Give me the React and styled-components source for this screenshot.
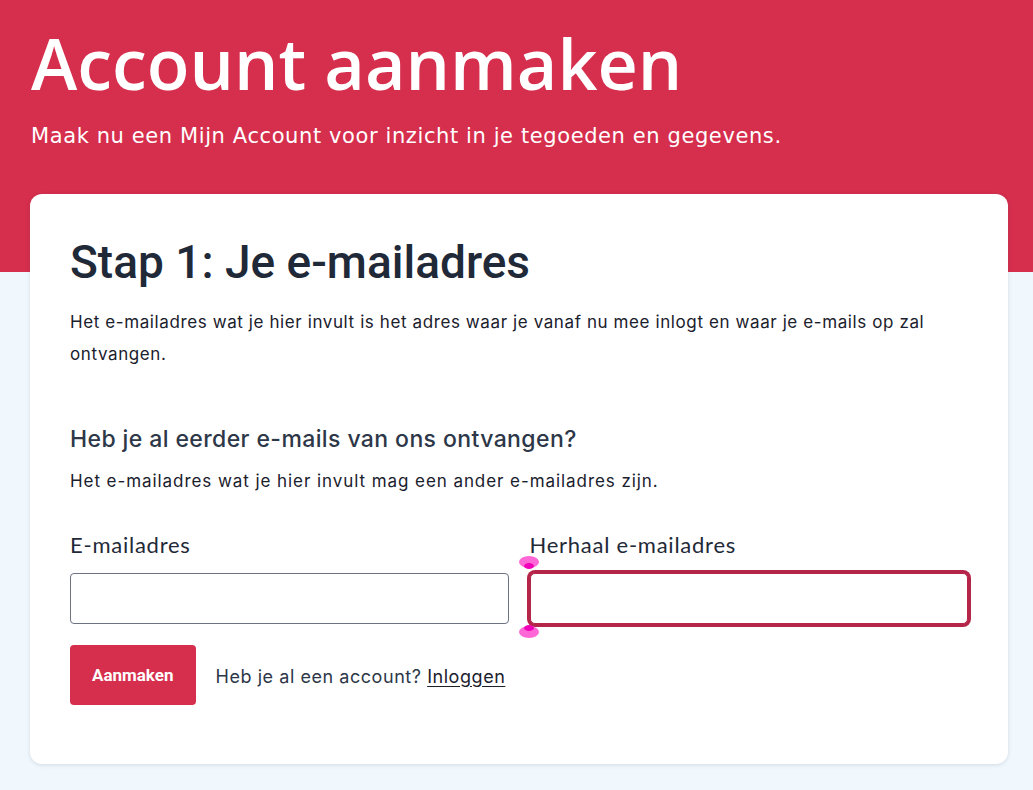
import styled, { createGlobalStyle } from 'styled-components';

const GlobalStyle = createGlobalStyle`
    html, body {
        margin: 0;
        padding: 0;
        background: #f1f8fd;
    }
    * {
        box-sizing: border-box;
    }
`;

const Page = styled.div`
    min-height: 790px;
    background: linear-gradient(#d62e4d 0, #d62e4d 272px, #f1f8fd 272px);
    padding: 21px 25px 26px 30px;
`;

const Title = styled.h1`
    margin: 0 0 0 1px;
    font-family: 'Open Sans', sans-serif;
    font-size: 70px;
    font-weight: 600;
    line-height: 84px;
    color: #fff;
`;

const Lead = styled.p`
    margin: 16px 0 0 1px;
    font-family: 'DejaVu Sans', sans-serif;
    font-size: 21px;
    letter-spacing: 0.6px;
    line-height: 30px;
    color: #fff;
`;

const Card = styled.section`
    margin-top: 43px;
    background: #fff;
    border-radius: 12px;
    box-shadow: 0 1px 4px rgba(30, 60, 90, 0.15);
    padding: 40px 40px 59px;
`;

const StepTitle = styled.h2`
    margin: 0;
    font-family: Roboto, sans-serif;
    font-size: 46px;
    font-weight: 500;
    line-height: 56px;
    color: #1f2937;
`;

const Text = styled.p`
    margin: ${p => p.$top || 0}px 0 0;
    font-family: Inter, sans-serif;
    font-size: 17px;
    letter-spacing: ${p => p.$spacing || 0.6}px;
    line-height: 32px;
    color: #1a202c;
`;

const SubTitle = styled.h3`
    margin: 53px 0 0;
    font-family: Inter, sans-serif;
    font-size: 23px;
    font-weight: 500;
    letter-spacing: 0.4px;
    line-height: 32px;
    color: #2d3748;
`;

const Fields = styled.div`
    display: grid;
    grid-template-columns: 1fr 1fr;
    column-gap: 21px;
    margin-top: 35px;
`;

const Field = styled.div`
    display: flex;
    flex-direction: column;
    gap: 15px;
`;

const Label = styled.label`
    font-family: Lato, sans-serif;
    font-size: 22px;
    letter-spacing: 0.75px;
    line-height: 26px;
    color: #1f2937;
`;

const InputWrap = styled.div`
    position: relative;
`;

const Input = styled.input`
    display: block;
    width: 100%;
    height: 51px;
    border: 1px solid #6b7280;
    border-radius: 4px;
    background: #fff;
    font-size: 17px;
    outline: none;
    ${p => p.$focused && 'border-color: #b5254a; border-radius: 5px; box-shadow: 0 0 0 3px #b5254a;'}
`;

const Handle = styled.span`
    position: absolute;
    left: -11px;
    ${p => (p.$bottom ? 'bottom: -14px;' : 'top: -17px;')}
    width: 20px;
    height: 12px;
    border-radius: 50%;
    background: #ff66d6;

    &::after {
        content: '';
        position: absolute;
        left: 5px;
        ${p => (p.$bottom ? 'top: -1px;' : 'bottom: -1px;')}
        width: 10px;
        height: 6px;
        border-radius: 50%;
        background: #f000b8;
    }
`;

const Actions = styled.div`
    display: flex;
    align-items: center;
    gap: 20px;
    margin-top: 21px;
`;

const Button = styled.button`
    height: 60px;
    padding: 0 22px;
    border: none;
    border-radius: 4px;
    background: #d62e4d;
    color: #fff;
    font-family: Roboto, sans-serif;
    font-size: 17px;
    font-weight: 700;
`;

const LoginText = styled.span`
    font-family: Inter, sans-serif;
    font-size: 18px;
    letter-spacing: 0.55px;
    color: #2d3748;
    margin-top: 2px;
`;

const LoginLink = styled.a`
    color: #1a202c;
    text-decoration: underline;
    text-underline-offset: 3px;
`;

export default function App() {
    return (
        <>
            <GlobalStyle />
            <Page>
                <Title>Account aanmaken</Title>
                <Lead>Maak nu een Mijn Account voor inzicht in je tegoeden en gegevens.</Lead>
                <Card>
                    <StepTitle>Stap 1: Je e-mailadres</StepTitle>
                    <Text $top={16}>
                        Het e-mailadres wat je hier invult is het adres waar je vanaf nu mee inlogt en waar je e-mails op zal ontvangen.
                    </Text>
                    <SubTitle>Heb je al eerder e-mails van ons ontvangen?</SubTitle>
                    <Text $top={10} $spacing={0.93}>Het e-mailadres wat je hier invult mag een ander e-mailadres zijn.</Text>
                    <Fields>
                        <Field>
                            <Label>E-mailadres</Label>
                            <InputWrap>
                                <Input type="email" />
                            </InputWrap>
                        </Field>
                        <Field>
                            <Label>Herhaal e-mailadres</Label>
                            <InputWrap>
                                <Input type="email" $focused />
                                <Handle />
                                <Handle $bottom />
                            </InputWrap>
                        </Field>
                    </Fields>
                    <Actions>
                        <Button>Aanmaken</Button>
                        <LoginText>
                            Heb je al een account? <LoginLink href="#">Inloggen</LoginLink>
                        </LoginText>
                    </Actions>
                </Card>
            </Page>
        </>
    );
}
